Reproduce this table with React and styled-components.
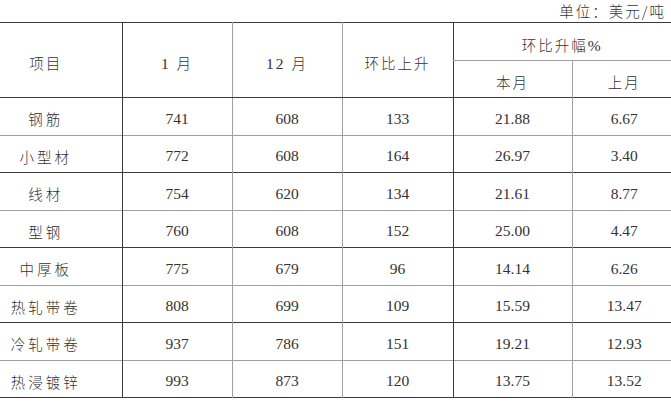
import React from "react";
import styled, { createGlobalStyle, css } from "styled-components";

const Global = createGlobalStyle`
  html, body { margin: 0; padding: 0; background: #fff; }
  body { width: 671px; height: 405px; overflow: hidden; }
`;

const DARK = "#3a3a3a";
const LIGHT = "#a0a0a0";

const Wrap = styled.div`
  width: 671px;
  font-family: "Liberation Serif", "Noto Sans CJK SC", serif;
  color: #333;
`;

const Unit = styled.div`
  height: 22px;
  box-sizing: border-box;
  display: flex;
  justify-content: flex-end;
  align-items: flex-start;
  padding: 2px 5px 0 0;
  font-family: "Noto Sans CJK SC", sans-serif;
  font-size: 14.5px;
  font-weight: 300;
  letter-spacing: 2px;
  line-height: 18px;
`;

const Table = styled.table`
  border-collapse: collapse;
  table-layout: fixed;
  width: 671px;
  border-top: 1.5px solid ${DARK};
`;

const Row = styled.tr`
  height: ${(p) => p.$h || 37.5}px;
  border-bottom: ${(p) => (p.$noLine ? "none" : `1px solid ${p.$light ? LIGHT : DARK}`)};
`;

const cellBase = css`
  padding: 5px 0 0 0;
  text-align: center;
  vertical-align: middle;
  border-left: 1px solid ${(p) => (p.$light ? LIGHT : DARK)};
  ${(p) => p.$first && css`border-left: none; padding-right: 30px;`}
  ${(p) => p.$last && css`padding-left: 5px;`}
  ${(p) => p.$bottom && css`border-bottom: 1px solid ${p.$bottom === "light" ? LIGHT : DARK};`}
`;

const HeadCell = styled.th`
  ${cellBase};
  font-family: "Liberation Serif", "Noto Sans CJK SC", serif;
  font-size: 15.5px;
  letter-spacing: 2px;
  font-weight: 300;
`;

const Cell = styled.td`
  ${cellBase};
  font-size: 15.5px;
  ${(p) =>
    p.$label &&
    css`
      font-family: "Noto Sans CJK SC", sans-serif;
      font-weight: 300;
      font-size: 14.5px;
      letter-spacing: 3px;
    `}
`;

const Cjk = styled.span`
  font-family: "Noto Sans CJK SC", sans-serif;
  font-weight: 300;
  font-size: 14.5px;
`;

const rows = [
  ["钢筋", "741", "608", "133", "21.88", "6.67"],
  ["小型材", "772", "608", "164", "26.97", "3.40"],
  ["线材", "754", "620", "134", "21.61", "8.77"],
  ["型钢", "760", "608", "152", "25.00", "4.47"],
  ["中厚板", "775", "679", "96", "14.14", "6.26"],
  ["热轧带卷", "808", "699", "109", "15.59", "13.47"],
  ["冷轧带卷", "937", "786", "151", "19.21", "12.93"],
  ["热浸镀锌", "993", "873", "120", "13.75", "13.52"],
];

const widths = [122, 110, 110, 111, 119, 99];
const lightCols = [false, false, true, true, false, true];

export default function App() {
  return (
    <Wrap>
      <Global />
      <Unit>单位：美元/吨</Unit>
      <Table>
        <colgroup>
          {widths.map((w, i) => (
            <col key={i} style={{ width: w }} />
          ))}
        </colgroup>
        <thead>
          <Row $h={38} $noLine>
            <HeadCell rowSpan={2} $first $bottom="dark">
              <Cjk>项目</Cjk>
            </HeadCell>
            <HeadCell rowSpan={2} $bottom="dark">
              1 <Cjk>月</Cjk>
            </HeadCell>
            <HeadCell rowSpan={2} $light $bottom="dark">
              12 <Cjk>月</Cjk>
            </HeadCell>
            <HeadCell rowSpan={2} $light $bottom="dark">
              <Cjk>环比上升</Cjk>
            </HeadCell>
            <HeadCell colSpan={2} $bottom="light">
              <Cjk>环比升幅</Cjk>%
            </HeadCell>
          </Row>
          <Row $h={37}>
            <HeadCell>
              <Cjk>本月</Cjk>
            </HeadCell>
            <HeadCell $light $last>
              <Cjk>上月</Cjk>
            </HeadCell>
          </Row>
        </thead>
        <tbody>
          {rows.map((r, i) => (
            <Row key={i} $light={i % 2 === 0}>
              {r.map((v, j) => (
                <Cell
                  key={j}
                  $first={j === 0}
                  $last={j === 5}
                  $label={j === 0}
                  $light={lightCols[j]}
                >
                  {v}
                </Cell>
              ))}
            </Row>
          ))}
        </tbody>
      </Table>
    </Wrap>
  );
}
